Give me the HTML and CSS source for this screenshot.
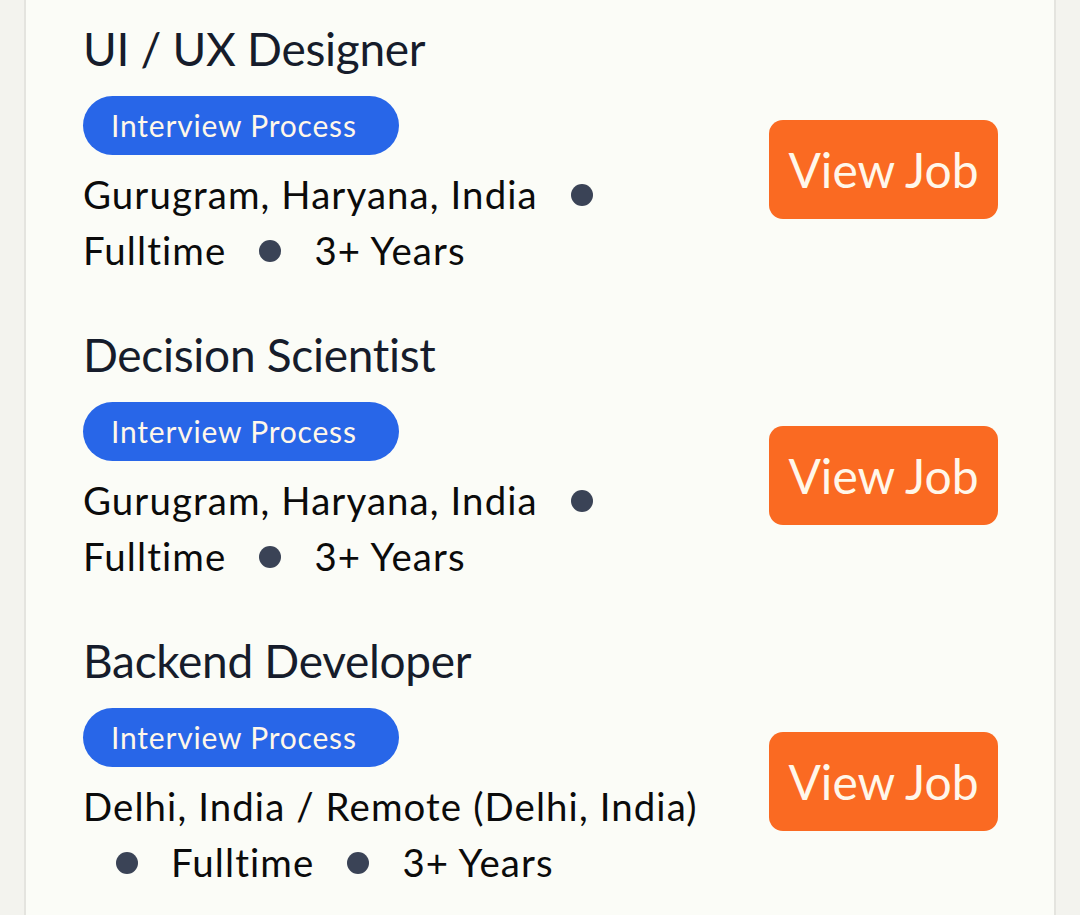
FILE: index.html
```html
<!DOCTYPE html>
<html lang="en">
<head>
<meta charset="utf-8">
<title>Jobs</title>
<link rel="stylesheet" href="styles.css">
</head>
<body>
<div class="page">
  <section class="card">
    <article class="job">
      <div class="job-info">
        <h2 class="job-title">UI / UX Designer</h2>
        <a class="badge" href="#">Interview Process</a>
        <p class="meta"><span>Gurugram, Haryana, India</span><span class="sep"><i class="dot"></i></span><span>Fulltime</span><span class="sep"><i class="dot"></i></span><span>3+ Years</span></p>
      </div>
      <a class="view-btn" href="#">View Job</a>
    </article>
    <article class="job">
      <div class="job-info">
        <h2 class="job-title">Decision Scientist</h2>
        <a class="badge" href="#">Interview Process</a>
        <p class="meta"><span>Gurugram, Haryana, India</span><span class="sep"><i class="dot"></i></span><span>Fulltime</span><span class="sep"><i class="dot"></i></span><span>3+ Years</span></p>
      </div>
      <a class="view-btn" href="#">View Job</a>
    </article>
    <article class="job">
      <div class="job-info">
        <h2 class="job-title">Backend Developer</h2>
        <a class="badge" href="#">Interview Process</a>
        <p class="meta"><span>Delhi, India / Remote (Delhi, India)</span><span class="sep"><i class="dot"></i></span><span>Fulltime</span><span class="sep"><i class="dot"></i></span><span>3+ Years</span></p>
      </div>
      <a class="view-btn" href="#">View Job</a>
    </article>
  </section>
</div>
</body>
</html>
```
FILE: styles.css
```css
* { box-sizing: border-box; }
html, body {
  margin: 0;
  padding: 0;
  background: #f3f3ee;
}
body {
  font-family: "Lato", "Noto Sans", sans-serif;
  color: #0b0f19;
}
.page {
  padding: 0 24px;
}
.card {
  background: #fbfcf7;
  border-left: 2px solid #e4e4df;
  border-right: 2px solid #e4e4df;
  padding: 15px 56px 0 57px;
  min-height: 915px;
}
.job {
  display: flex;
  align-items: center;
  gap: 58px;
}
.job-info {
  flex: 1;
  min-width: 0;
  padding-bottom: 43px;
}
.job-title {
  margin: 0;
  font-size: 46px;
  line-height: 67px;
  font-weight: 400;
  letter-spacing: -0.3px;
  color: #161c2b;
}
.badge {
  display: inline-block;
  margin-top: 14px;
  padding: 0 42px 0 28px;
  height: 59px;
  line-height: 59px;
  border-radius: 30px;
  background: #2866e8;
  color: #fff7ea;
  font-size: 30px;
  letter-spacing: 0.8px;
  text-decoration: none;
}
.meta {
  margin: 11px 0 0;
  font-size: 38.4px;
  line-height: 56px;
  letter-spacing: 1.1px;
  color: #0b0b0b;
}
.sep {
  display: inline-block;
  padding: 0 33px;
  vertical-align: baseline;
}
.dot {
  display: inline-block;
  width: 22px;
  height: 22px;
  border-radius: 50%;
  background: #3a4356;
  vertical-align: 3px;
}
.view-btn {
  flex: none;
  display: inline-block;
  width: 229px;
  height: 99px;
  margin-top: 2px;
  line-height: 99px;
  text-align: center;
  border-radius: 14px;
  background: #fa6a22;
  color: #fff7ea;
  font-size: 48px;
  text-decoration: none;
}
```
